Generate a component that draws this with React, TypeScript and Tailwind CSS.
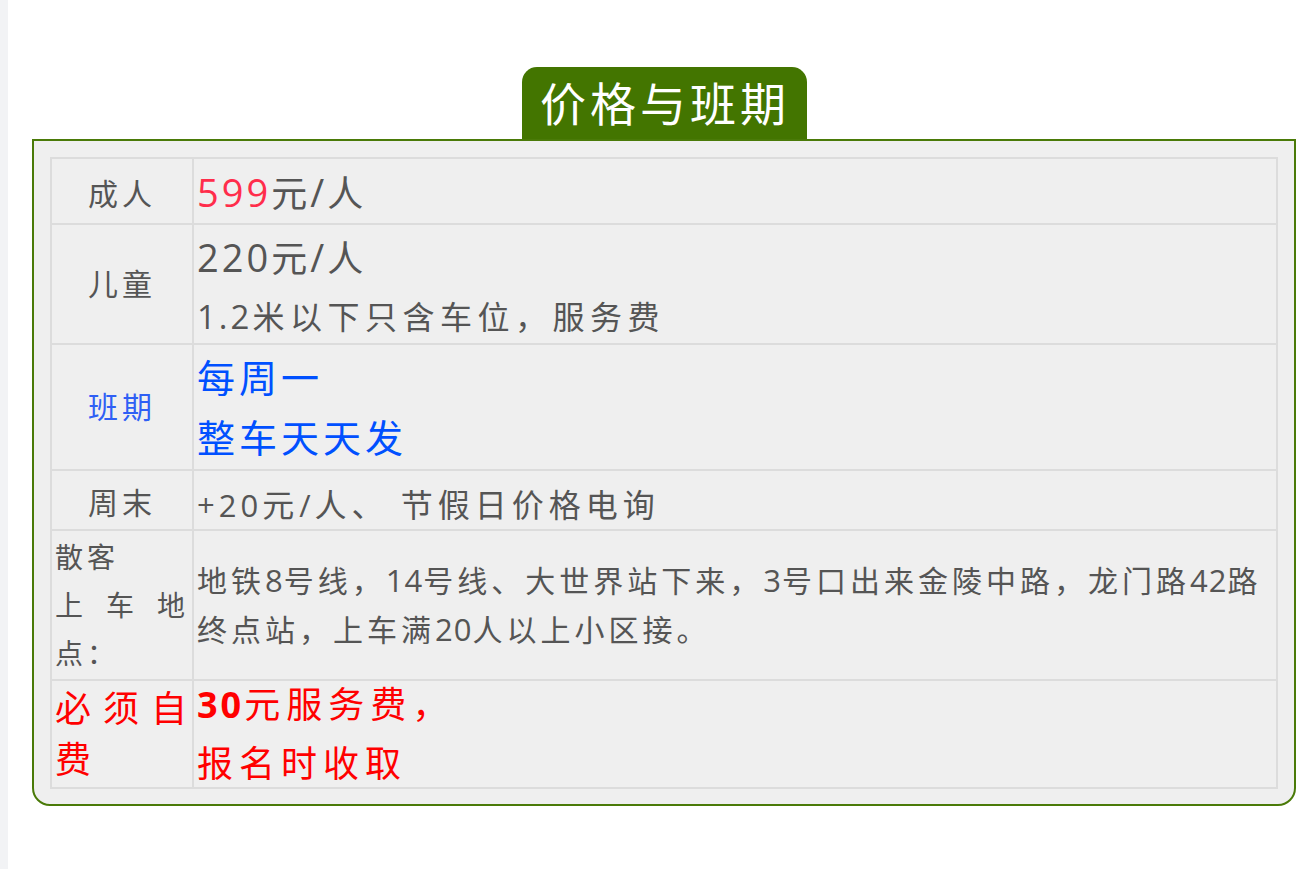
import React from "react";

function M({ t, l, c }: { t: string; l: string; c: string }) {
  const parts = t.split(/([\u0000-\u00ff]+)/).filter((p) => p.length > 0);
  return (
    <>
      {parts.map((p, i) =>
        /^[\u0000-\u00ff]+$/.test(p) ? (
          <span key={i} className={l}>
            {p}
          </span>
        ) : (
          <span key={i} className={c}>
            {p}
          </span>
        )
      )}
    </>
  );
}

const cell = "bg-[#efefef] flex flex-col";
const label =
  "bg-[#efefef] flex items-center justify-center text-[30px] tracking-[4px] leading-[48px] text-[#555]";

export default function App() {
  return (
    <div className="min-h-[869px] flex bg-white font-['Open_Sans','Noto_Sans_CJK_SC',sans-serif]">
      <div className="w-[8px] shrink-0 bg-[#f2f3f5]" />
      <div className="pl-[24px] pt-[67px]">
        <div className="w-[1264px] flex flex-col items-center">
          <div className="h-[72px] w-[285px] rounded-t-[15px] bg-[#437500] flex items-center justify-center text-white text-[46px] tracking-[4px] leading-none pl-[2px]">
            价格与班期
          </div>
          <div className="w-full border-2 border-[#4a7a08] rounded-b-[18px] bg-[#efefef] px-[16px] pt-[16px] pb-[15px]">
            <div className="grid grid-cols-[140px_1082px] grid-rows-[64px_118px_124px_58px_148px_106px] gap-[2px] p-[2px] bg-[#dcdcdc] w-[1228px]">
              {/* Row 1 */}
              <div className={label + " pt-[6px]"}>成人</div>
              <div className={cell + " px-[3px] text-[#555] pt-[1px]"}>
                <div className="text-[38px] leading-[64px]">
                  <span className="text-[#ff2d4b]">
                    <M t="599" l="text-[38px] tracking-[3px] leading-none" c="" />
                  </span>
                  <M
                    t="元/人"
                    l="text-[38px] tracking-[3px] leading-none"
                    c="text-[36px] tracking-[3px] leading-none"
                  />
                </div>
              </div>

              {/* Row 2 */}
              <div className={label}>儿童</div>
              <div className={cell + " px-[3px] text-[#555] pt-[4px]"}>
                <div className="text-[38px] leading-[57px]">
                  <M
                    t="220元/人"
                    l="text-[38px] tracking-[3px] leading-none"
                    c="text-[36px] tracking-[3px] leading-none"
                  />
                </div>
                <div className="text-[33px] leading-[62px]">
                  <M
                    t="1.2米以下只含车位，服务费"
                    l="text-[33px] tracking-[3px] leading-none"
                    c="text-[32px] tracking-[5.5px] leading-none"
                  />
                </div>
              </div>

              {/* Row 3 */}
              <div className={label}>
                <span className="text-[#2f5ff5]">班期</span>
              </div>
              <div className={cell + " justify-center px-[3px] text-[#0050ff] text-[38px] tracking-[4px] leading-[60px]"}>
                <div>每周一</div>
                <div>整车天天发</div>
              </div>

              {/* Row 4 */}
              <div className={label + " pt-[5px]"}>周末</div>
              <div className={cell + " px-[3px] text-[#555] pt-[5px]"}>
                <div className="text-[31px] leading-[58px]">
                  <M
                    t="+20元/人、 节假日价格电询"
                    l="text-[31px] tracking-[4px] leading-none"
                    c="text-[32px] tracking-[5px] leading-none"
                  />
                </div>
              </div>

              {/* Row 5 */}
              <div className={cell + " justify-center px-[3px] text-[#555] text-[28px] tracking-[4px] leading-[48px] text-justify"}>
                <div>
                  散客
                  <br />
                  上车地点：
                </div>
              </div>
              <div className={cell + " justify-center px-[3px] text-[#555]"}>
                <div className="text-[31px] leading-[49px]">
                  <M
                    t="地铁8号线，14号线、大世界站下来，3号口出来金陵中路，龙门路42路终点站，上车满20人以上小区接。"
                    l="text-[31px] tracking-[1px] leading-none"
                    c="text-[30px] tracking-[4px] leading-none"
                  />
                </div>
              </div>

              {/* Row 6 */}
              <div className={cell + " justify-center px-[3px] text-[#ff0000] text-[36px] tracking-[2px] leading-[51px] text-justify"}>
                <div>必须自费</div>
              </div>
              <div className={cell + " justify-center px-[3px] text-[#ff0000] leading-[52px]"}>
                <div>
                  <span className="text-[36px] font-bold tracking-[3px]">30</span>
                  <span className="text-[36px] tracking-[6px]">元服务费，</span>
                </div>
                <div className="text-[36px] tracking-[6px]">报名时收取</div>
              </div>
            </div>
          </div>
        </div>
      </div>
    </div>
  );
}
